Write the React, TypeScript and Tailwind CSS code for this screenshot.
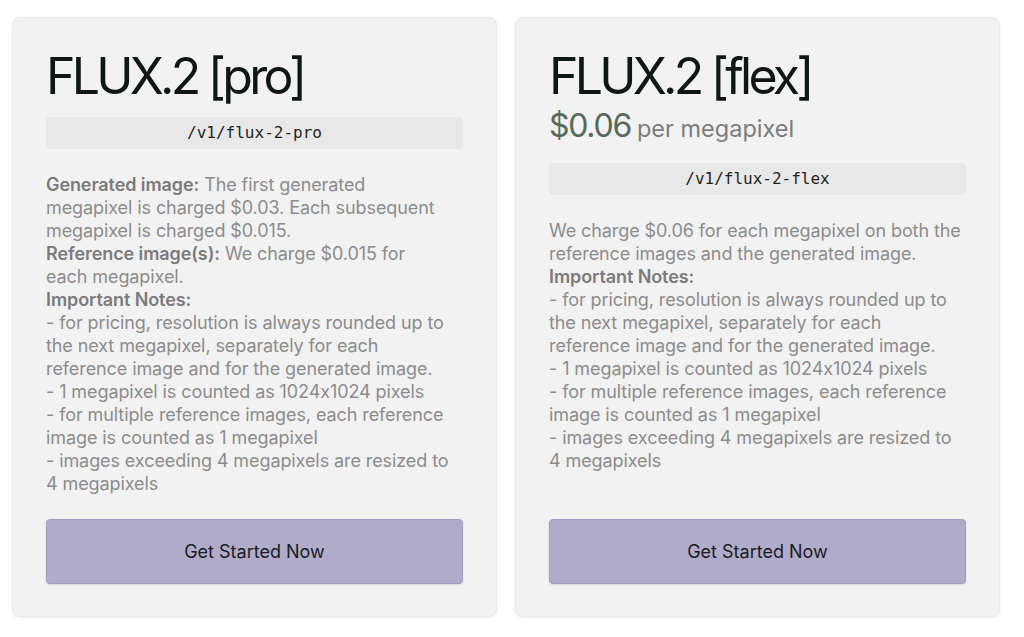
import type { ReactNode } from "react";

const sans = "font-['Inter','Noto_Sans',sans-serif]";

function Card({
  title,
  price,
  endpoint,
  children,
}: {
  title: string;
  price?: ReactNode;
  endpoint: string;
  children: ReactNode;
}) {
  return (
    <div className="flex w-[485px] flex-col rounded-[8px] border border-[#e9e9e9] bg-[#f2f2f2] px-[33px] pt-[33px] pb-[32px] shadow-[0_1px_4px_rgba(0,0,0,0.06)]">
      <h2 className="text-[50px] leading-[50px] font-normal tracking-[-0.075em] text-[#0e1713]">
        {title}
      </h2>
      {price}
      <div
        className={
          "flex h-[32px] items-center justify-center rounded-[4px] bg-[#e8e8e8] font-['DejaVu_Sans_Mono',monospace] text-[16px] text-[#1f1f1f] " +
          (price ? "mt-[15px]" : "mt-4")
        }
      >
        {endpoint}
      </div>
      <div className="mt-6 mb-6 text-[18px] leading-[23px] tracking-[-0.005em] whitespace-nowrap text-[#8c8c8c] [font-feature-settings:'calt'_0]">
        {children}
      </div>
      <button className="mt-auto h-[65px] w-full rounded-[4px] border border-[#a29cc2] bg-[#b0abca] text-[18px] text-[#1b1b1f] shadow-[0_1px_2px_rgba(0,0,0,0.12)]">
        Get Started Now
      </button>
    </div>
  );
}

function B({ children }: { children: ReactNode }) {
  return <span className="font-semibold text-[#7b7b7b]">{children}</span>;
}

function Lines({ lines }: { lines: ReactNode[] }) {
  return (
    <>
      {lines.map((l, i) => (
        <div key={i}>{l}</div>
      ))}
    </>
  );
}

const notes: ReactNode[] = [
  <B>Important Notes:</B>,
  "- for pricing, resolution is always rounded up to",
  "the next megapixel, separately for each",
  "reference image and for the generated image.",
  "- 1 megapixel is counted as 1024x1024 pixels",
  "- for multiple reference images, each reference",
  "image is counted as 1 megapixel",
  "- images exceeding 4 megapixels are resized to",
  "4 megapixels",
];

export default function App() {
  return (
    <div className={`min-h-[637px] bg-white ${sans}`}>
      <div className="flex items-stretch gap-[18px] pt-[17px] pl-[12px]">
        <Card title="FLUX.2 [pro]" endpoint="/v1/flux-2-pro">
          <Lines
            lines={[
              <>
                <B>Generated image:</B> The first generated
              </>,
              "megapixel is charged $0.03. Each subsequent",
              "megapixel is charged $0.015.",
              <>
                <B>Reference image(s):</B> We charge $0.015 for
              </>,
              "each megapixel.",
              ...notes,
            ]}
          />
        </Card>
        <Card
          title="FLUX.2 [flex]"
          endpoint="/v1/flux-2-flex"
          price={
            <div className="mt-[6px] flex items-baseline gap-[6px] leading-[38px]">
              <span className="text-[32px] tracking-[-0.04em] text-[#566a5c]">
                $0.06
              </span>
              <span className="text-[23.5px] text-[#7c7c7c]">
                per megapixel
              </span>
            </div>
          }
        >
          <Lines
            lines={[
              "We charge $0.06 for each megapixel on both the",
              "reference images and the generated image.",
              ...notes,
            ]}
          />
        </Card>
      </div>
    </div>
  );
}
